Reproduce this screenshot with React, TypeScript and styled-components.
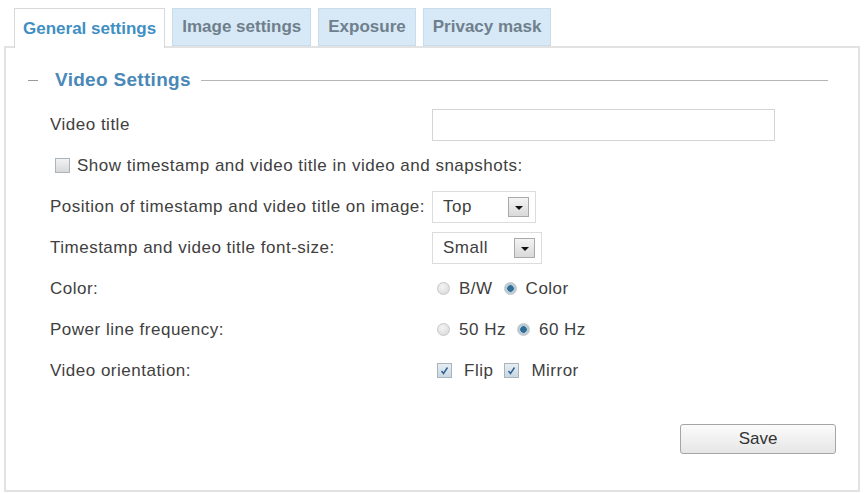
import React from 'react';
import styled, { createGlobalStyle } from 'styled-components';

/* -------------- GLOBAL --------------- */

const GlobalStyle = createGlobalStyle`
  body {
    margin: 0;
    background: #ffffff;
    font-family: "Liberation Sans", Arial, sans-serif;
  }
`;

/* -------------- LAYOUT --------------- */

const Page = styled.div`
  width: 864px;
  height: 493px;
  padding: 8px 4px 0 4px;
  box-sizing: border-box;
  overflow: hidden;
`;

const TabBar = styled.div`
  display: flex;
  gap: 7px;
  margin-left: 10px;
  height: 38px;
  position: relative;
  z-index: 1;
`;

const Tab = styled.div<{ $active?: boolean }>`
  display: flex;
  align-items: center;
  padding: 0 ${p => (p.$active ? 8 : 9)}px;
  height: ${p => (p.$active ? '40px' : '38px')};
  box-sizing: border-box;
  font-size: 17px;
  font-weight: bold;
  color: ${p => (p.$active ? '#3f8fc4' : '#6f7f8c')};
  background: ${p => (p.$active ? '#ffffff' : '#d7e9f6')};
  border: 1px solid ${p => (p.$active ? '#d8d8d8' : '#c9dcea')};
  border-bottom: ${p => (p.$active ? 'none' : '1px solid #c9dcea')};
`;

const Panel = styled.div`
  border: 2px solid #e2e2e2;
  height: 446px;
  box-sizing: border-box;
  padding: 20px 30px 0 22px;
  display: flex;
  flex-direction: column;
`;

const Legend = styled.div`
  display: flex;
  align-items: center;
  height: 24px;
`;

const LegendDash = styled.div`
  width: 10px;
  height: 1px;
  background: #9a9a9a;
`;

const LegendTitle = styled.span`
  font-size: 19px;
  font-weight: bold;
  letter-spacing: 0.3px;
  color: #4a88b8;
  margin: 0 10px 0 17px;
`;

const LegendLine = styled.div`
  flex: 1;
  height: 1px;
  background: #b5b5b5;
`;

const Form = styled.div`
  display: grid;
  grid-template-columns: 382px 1fr;
  grid-auto-rows: 41px;
  margin: 12px 0 0 22px;
  font-size: 17px;
  letter-spacing: 0.5px;
  color: #404040;
`;

const Label = styled.div`
  display: flex;
  align-items: center;
  white-space: nowrap;
`;

const Control = styled.div`
  display: flex;
  align-items: center;
`;

const FullRow = styled.div`
  grid-column: 1 / span 2;
  display: flex;
  align-items: center;
`;

const TextInput = styled.div`
  width: 343px;
  height: 32px;
  box-sizing: border-box;
  border: 1px solid #d4d4d4;
  background: #ffffff;
`;

const Select = styled.div<{ $width: number }>`
  width: ${p => p.$width}px;
  height: 32px;
  box-sizing: border-box;
  border: 1px solid #dcdcdc;
  display: flex;
  align-items: center;
  justify-content: space-between;
  padding: 0 6px 0 10px;
`;

const SelectArrow = styled.div`
  width: 21px;
  height: 20px;
  box-sizing: border-box;
  border: 1px solid #a9a9a9;
  background: linear-gradient(#f4f4f4, #d9d9d9);
  display: flex;
  align-items: center;
  justify-content: center;

  &::after {
    content: '';
    border-left: 4px solid transparent;
    border-right: 4px solid transparent;
    border-top: 4px solid #111111;
    margin-top: 2px;
  }
`;

const Radio = styled.span<{ $checked?: boolean }>`
  display: inline-flex;
  width: 13px;
  height: 13px;
  border-radius: 50%;
  box-sizing: border-box;
  border: 1px solid #c8c8c8;
  background: ${p =>
    p.$checked
      ? 'radial-gradient(circle, #2f6f95 0 3px, #b9cbd6 3.5px)'
      : 'radial-gradient(circle at 40% 35%, #f4f4f4, #d6d6d6)'};
  margin: 0 9px 0 5px;
`;

const CheckBox = styled.span<{ $checked?: boolean }>`
  display: inline-flex;
  align-items: center;
  justify-content: center;
  width: 15px;
  height: 15px;
  box-sizing: border-box;
  border: 1px solid #a9b4bc;
  background: ${p =>
    p.$checked
      ? 'linear-gradient(#e6eef4, #c9d7e2)'
      : 'linear-gradient(#f2f2f2, #d8d8d8)'};
  margin: 0 ${p => (p.$checked ? 12 : 7)}px 0 5px;
`;

const Option = styled.span`
  margin-right: 6px;
  display: inline-flex;
  align-items: center;
`;

const ButtonRow = styled.div`
  display: flex;
  justify-content: flex-end;
  margin-top: 33px;
`;

const SaveButton = styled.button`
  width: 156px;
  height: 30px;
  border: 1px solid #a5a5a5;
  border-radius: 3px;
  background: linear-gradient(#fbfbfb, #e6e6e6);
  font-family: "Liberation Sans", Arial, sans-serif;
  font-size: 17px;
  color: #333333;
  margin-right: -8px;
`;

/* -------------- PARTS --------------- */

const Check = () => (
  <svg width="9" height="9" viewBox="0 0 9 9">
    <path d="M1.5 5 L3.5 7.5 L7.5 1.5" stroke="#2c5f8f" strokeWidth="1.4" fill="none" />
  </svg>
);

const App = () => {
  return (
    <>
      <GlobalStyle />
      <Page>
        <TabBar>
          <Tab $active>General settings</Tab>
          <Tab>Image settings</Tab>
          <Tab>Exposure</Tab>
          <Tab>Privacy mask</Tab>
        </TabBar>
        <Panel>
          <Legend>
            <LegendDash />
            <LegendTitle>Video Settings</LegendTitle>
            <LegendLine />
          </Legend>

          <Form>
            <Label>Video title</Label>
            <Control>
              <TextInput />
            </Control>

            <FullRow>
              <CheckBox />
              Show timestamp and video title in video and snapshots:
            </FullRow>

            <Label>Position of timestamp and video title on image:</Label>
            <Control>
              <Select $width={104}>
                Top
                <SelectArrow />
              </Select>
            </Control>

            <Label>Timestamp and video title font-size:</Label>
            <Control>
              <Select $width={110}>
                Small
                <SelectArrow />
              </Select>
            </Control>

            <Label>Color:</Label>
            <Control>
              <Option>
                <Radio />
                B/W
              </Option>
              <Option>
                <Radio $checked />
                Color
              </Option>
            </Control>

            <Label>Power line frequency:</Label>
            <Control>
              <Option>
                <Radio />
                50 Hz
              </Option>
              <Option>
                <Radio $checked />
                60 Hz
              </Option>
            </Control>

            <Label>Video orientation:</Label>
            <Control>
              <Option>
                <CheckBox $checked>
                  <Check />
                </CheckBox>
                Flip
              </Option>
              <Option>
                <CheckBox $checked>
                  <Check />
                </CheckBox>
                Mirror
              </Option>
            </Control>
          </Form>

          <ButtonRow>
            <SaveButton>Save</SaveButton>
          </ButtonRow>
        </Panel>
      </Page>
    </>
  );
};

export default App;
